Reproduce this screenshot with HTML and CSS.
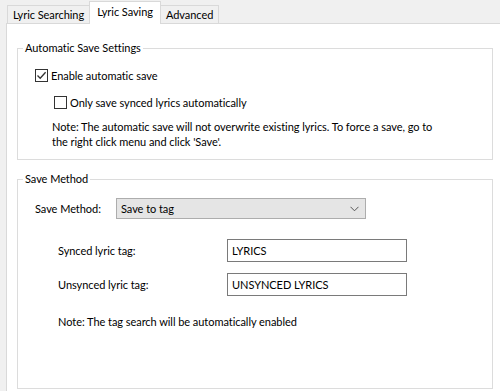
FILE: index.html
```html
<!DOCTYPE html>
<html lang="en">
<head>
    <meta charset="UTF-8">
    <title>Lyric Settings</title>
    <link rel="stylesheet" href="styles.css">
</head>
<body>
    <div class="tabs">
        <div class="tab">Lyric Searching</div>
        <div class="tab active">Lyric Saving</div>
        <div class="tab">Advanced</div>
    </div>

    <div class="panel">
        <fieldset class="group group-auto">
            <legend>Automatic Save Settings</legend>

            <label class="option">
                <span class="check checked">
                    <svg width="11" height="11" viewBox="0 0 11 11"><path d="M1.5 5.5 L4.2 8.3 L9.6 2.2" fill="none" stroke="#333" stroke-width="1.3"/></svg>
                </span>
                Enable automatic save
            </label>

            <label class="option option-sub">
                <span class="check"></span>
                Only save synced lyrics automatically
            </label>

            <p class="note note-auto">Note: The automatic save will not overwrite existing lyrics. To force a save, go to<br>the right click menu and click 'Save'.</p>
        </fieldset>

        <fieldset class="group group-method">
            <legend>Save Method</legend>

            <div class="field field-method">
                <span class="field-label">Save Method:</span>
                <div class="select">
                    <span>Save to tag</span>
                    <svg width="9" height="6" viewBox="0 0 9 6"><path d="M0.5 0.8 L4.5 4.8 L8.5 0.8" fill="none" stroke="#555" stroke-width="1"/></svg>
                </div>
            </div>

            <div class="field field-tag">
                <span class="field-label">Synced lyric tag:</span>
                <div class="textbox">LYRICS</div>
            </div>

            <div class="field field-tag field-tag-next">
                <span class="field-label">Unsynced lyric tag:</span>
                <div class="textbox">UNSYNCED LYRICS</div>
            </div>

            <p class="note note-tag">Note: The tag search will be automatically enabled</p>
        </fieldset>
    </div>
</body>
</html>
```

FILE: styles.css
```css
* {
    margin: 0;
    padding: 0;
    box-sizing: border-box;
}

body {
    font-family: Lato, "Noto Sans", sans-serif;
    font-size: 11px;
    letter-spacing: -0.05px;
    color: #000;
    background: #f0f0f0;
    width: 500px;
    height: 391px;
    overflow: hidden;
    display: flex;
    flex-direction: column;
}

/* tab strip */
.tabs {
    display: flex;
    align-items: flex-end;
    height: 23px;
    padding-left: 7px;
}

.tab {
    height: 18px;
    line-height: 17px;
    padding: 0 5px;
    border: 1px solid #d9d9d9;
    border-bottom: none;
    background: #f0f0f0;
    white-space: nowrap;
}

.tab + .tab {
    margin-left: -1px;
}

.tab.active {
    position: relative;
    z-index: 1;
    height: 23px;
    line-height: 19px;
    margin: 0 -1px -1px;
    padding: 0 7px;
    background: #fff;
}

.tab.active + .tab {
    margin-left: 0;
}

/* page */
.panel {
    flex: 1;
    margin-left: 6px;
    padding: 16px 0 0 10px;
    background: #fff;
    border-top: 1px solid #d9d9d9;
    border-left: 1px solid #d9d9d9;
}

.group {
    width: 476px;
    border: 1px solid #dcdcdc;
    display: flex;
    flex-direction: column;
    align-items: flex-start;
}

.group legend {
    margin-left: 5px;
    padding: 0 2px;
    line-height: 16px;
}

.group-auto {
    height: 120px;
}

.group-method {
    height: 218px;
    margin-top: 11px;
}

/* checkboxes */
.option {
    display: flex;
    align-items: center;
    gap: 3px;
    height: 16px;
    margin: 11px 0 0 17px;
}

.option-sub {
    margin: 11px 0 0 36px;
}

.check {
    width: 13px;
    height: 13px;
    border: 1px solid #333;
    background: #fff;
    display: flex;
    align-items: center;
    justify-content: center;
}

.note {
    line-height: 15px;
}

.note-auto {
    margin: 9px 0 0 34px;
}

.note-tag {
    margin: 18px 0 0 40px;
    line-height: 16px;
}

/* fields */
.field {
    display: flex;
    align-items: center;
}

.field-method {
    margin: 11px 0 0 17px;
}

.field-method .field-label {
    width: 81px;
}

.select {
    width: 250px;
    height: 21px;
    padding: 0 6px 0 4px;
    background: #e5e5e5;
    border: 1px solid #adadad;
    display: flex;
    align-items: center;
    justify-content: space-between;
}

.field-tag {
    margin: 20px 0 0 40px;
}

.field-tag-next {
    margin-top: 11px;
}

.field-tag .field-label {
    width: 169px;
}

.textbox {
    width: 180px;
    height: 23px;
    line-height: 21px;
    padding-left: 4px;
    border: 1px solid #7a7a7a;
    background: #fff;
}
```
